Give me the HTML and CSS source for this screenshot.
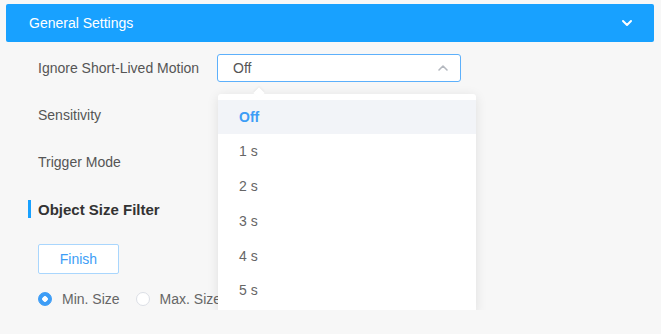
FILE: index.html
```html
<!DOCTYPE html>
<html lang="en">
<head>
  <meta charset="UTF-8" />
  <title>General Settings</title>
  <link rel="stylesheet" href="styles.css">
</head>
<body>
  <div class="panel">
    <div class="panel-header">
      <span>General Settings</span>
      <svg class="chev" width="12" height="8" viewBox="0 0 12 8"><path d="M2 2l4 4 4-4" fill="none" stroke="#fff" stroke-width="2" stroke-linecap="round" stroke-linejoin="round"/></svg>
    </div>

    <div class="form">
      <div class="row">
        <label class="label">Ignore Short-Lived Motion</label>
        <div class="select-wrap">
          <div class="select">
            <span>Off</span>
            <svg width="12" height="8" viewBox="0 0 12 8"><path d="M2 6l4-4 4 4" fill="none" stroke="#b4b8bf" stroke-width="1.6" stroke-linecap="round" stroke-linejoin="round"/></svg>
          </div>
          <div class="dropdown">
            <div class="arrow"></div>
            <div class="option selected">Off</div>
            <div class="option">1 s</div>
            <div class="option">2 s</div>
            <div class="option">3 s</div>
            <div class="option">4 s</div>
            <div class="option">5 s</div>
          </div>
        </div>
      </div>
      <div class="row"><label class="label">Sensitivity</label></div>
      <div class="row"><label class="label">Trigger Mode</label></div>

      <div class="section-title">Object Size Filter</div>

      <button class="btn">Finish</button>

      <div class="radios">
        <label class="radio"><span class="dot checked"></span>Min. Size</label>
        <label class="radio"><span class="dot"></span>Max. Size</label>
      </div>
    </div>
  </div>
</body>
</html>
```

FILE: styles.css
```css
body {
  margin: 0;
  font-family: "Liberation Sans", Arial, sans-serif;
  font-size: 14px;
  background-color: #f7f7f7;
  color: #555;
}

.panel-header {
  margin: 4px 7px 0 6px;
  height: 38px;
  background: #18a1ff;
  border-radius: 2px;
  color: #fff;
  display: flex;
  align-items: center;
  justify-content: space-between;
  padding: 0 21px 0 23px;
  font-size: 14px;
}

.form {
  padding: 2px 0 0 38px;
}

.row {
  height: 47px;
  display: flex;
  align-items: center;
}

.label {
  width: 179px;
}

.select-wrap {
  position: relative;
}

.select {
  width: 244px;
  height: 28px;
  box-sizing: border-box;
  border: 1px solid #5db0fb;
  border-radius: 3px;
  background: #fff;
  display: flex;
  align-items: center;
  justify-content: space-between;
  padding: 0 11px 0 15px;
}

.dropdown {
  position: absolute;
  top: 40px;
  left: 1px;
  width: 258px;
  background: #fff;
  border-radius: 3px;
  box-shadow: 0 2px 12px rgba(0, 0, 0, 0.1);
  padding: 6px 0 5px;
  z-index: 2;
}

.arrow {
  position: absolute;
  top: -5px;
  left: 37px;
  width: 8px;
  height: 8px;
  background: #fff;
  transform: rotate(45deg);
  box-shadow: -1px -1px 2px rgba(0, 0, 0, 0.05);
}

.option {
  position: relative;
  height: 34.8px;
  line-height: 34.8px;
  padding-left: 21px;
  color: #666;
}

.option.selected {
  background: #f2f4f8;
  color: #3d9df6;
  font-weight: bold;
}

.section-title {
  height: 48px;
  display: flex;
  align-items: center;
  font-weight: bold;
  font-size: 15px;
  color: #333;
  position: relative;
}

.section-title::before {
  content: "";
  width: 3px;
  height: 18px;
  background: #18a1ff;
  margin: 0 7px 0 -10px;
}

.btn {
  margin-top: 11px;
  width: 81px;
  height: 30px;
  border: 1px solid #a9d6fd;
  background: #fff;
  color: #3d9df6;
  font-family: inherit;
  font-size: 14px;
  border-radius: 2px;
  padding: 0;
}

.radios {
  display: flex;
  gap: 16px;
  margin-top: 14px;
  height: 22px;
  align-items: center;
}

.radio {
  display: flex;
  align-items: center;
  gap: 10px;
  color: #666;
}

.dot {
  width: 14px;
  height: 14px;
  box-sizing: border-box;
  border-radius: 50%;
  border: 1px solid #dcdfe6;
  background: #fff;
}

.dot.checked {
  border-color: #3d9df6;
  background: radial-gradient(circle, #fff 2.5px, #3d9df6 3px);
}
```
